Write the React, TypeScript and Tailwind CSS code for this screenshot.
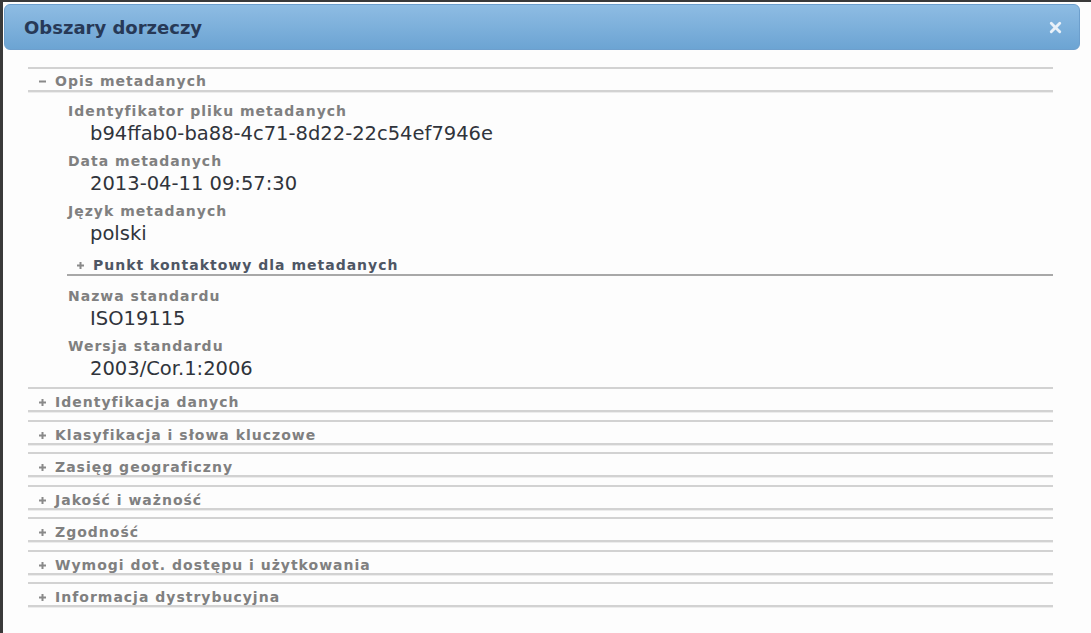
import { X } from "lucide-react";

type Item = { label: string; value: string };

const topItems: Item[] = [
  { label: "Identyfikator pliku metadanych", value: "b94ffab0-ba88-4c71-8d22-22c54ef7946e" },
  { label: "Data metadanych", value: "2013-04-11 09:57:30" },
  { label: "Język metadanych", value: "polski" },
];

const bottomItems: Item[] = [
  { label: "Nazwa standardu", value: "ISO19115" },
  { label: "Wersja standardu", value: "2003/Cor.1:2006" },
];

const collapsed = [
  "Identyfikacja danych",
  "Klasyfikacja i słowa kluczowe",
  "Zasięg geograficzny",
  "Jakość i ważność",
  "Zgodność",
  "Wymogi dot. dostępu i użytkowania",
  "Informacja dystrybucyjna",
];

function Toggle({ open }: { open?: boolean }) {
  return (
    <svg width="7" height="7" viewBox="0 0 7 7" className="shrink-0">
      <rect x="0" y="2.5" width="7" height="2" fill="#8a8a8a" />
      {!open && <rect x="2.5" y="0" width="2" height="7" fill="#8a8a8a" />}
    </svg>
  );
}

function SectionHeader({ title, open }: { title: string; open?: boolean }) {
  return (
    <div
      className={`h-[25px] ${open ? "pt-[3px]" : "pt-[6px]"} flex items-center gap-[9px] pl-[11px] border-y-2 border-[#d2d2d2] shadow-[0_1px_0_#ececec] text-[14px] font-bold tracking-[1px] text-[#808080]`}
    >
      <Toggle open={open} />
      <span>{title}</span>
    </div>
  );
}

function Field({ item }: { item: Item }) {
  return (
    <div className="mb-[4px]">
      <div className="pl-[40px] leading-[20px] text-[14px] font-bold tracking-[1px] text-[#808080]">
        {item.label}
      </div>
      <div className="pl-[62px] leading-[26px] text-[19.5px] text-[#30343b]">{item.value}</div>
    </div>
  );
}

export default function App() {
  return (
    <div className="w-[1091px] h-[633px] overflow-hidden bg-[#fdfdfd] border-t-2 border-l-[3px] border-[#3a3a3a] font-['DejaVu_Sans',sans-serif]">
      <div className="ml-px mt-[2px] w-[1076px] h-[46px] rounded-[6px] border border-[#6d9fcd] bg-gradient-to-b from-[#8ebce3] to-[#6ca4d3] flex items-center justify-between pl-[19px] pr-[15px]">
        <span className="text-[18px] font-bold text-[#273957]">Obszary dorzeczy</span>
        <X size={17} strokeWidth={4} className="text-[#e9f1f9]" />
      </div>

      <div className="mt-[17px] ml-[25px] w-[1025px]">
        <SectionHeader title="Opis metadanych" open />
        <div className="pt-[9px] pb-px">
          {topItems.map((it) => (
            <Field key={it.label} item={it} />
          ))}
          <div className="ml-[39px] mt-px h-[25px] pt-[5px] mb-[10px] flex items-center gap-[9px] pl-[10px] border-b-2 border-[#a8a8a8] text-[14px] font-bold tracking-[1px] text-[#4e5664]">
            <Toggle />
            <span>Punkt kontaktowy dla metadanych</span>
          </div>
          {bottomItems.map((it) => (
            <Field key={it.label} item={it} />
          ))}
        </div>
        {collapsed.map((t) => (
          <div key={t} className="mb-[7.5px]">
            <SectionHeader title={t} />
          </div>
        ))}
      </div>
    </div>
  );
}
